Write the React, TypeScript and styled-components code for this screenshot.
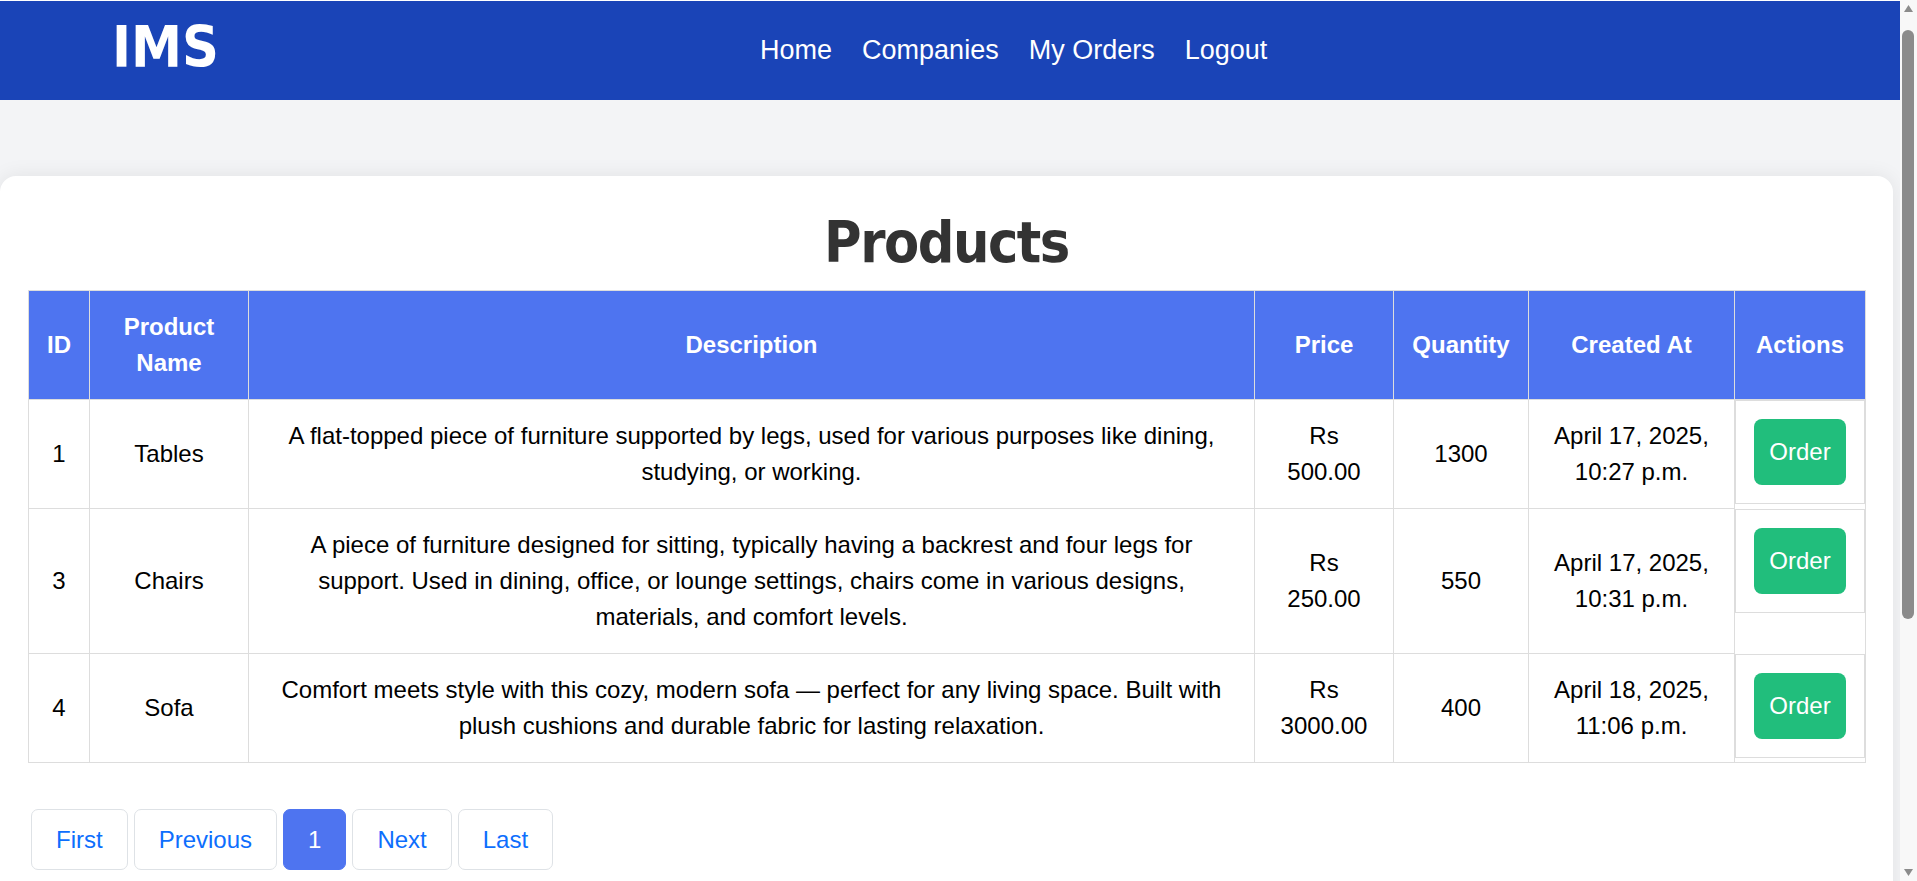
import React from 'react';
import styled, { createGlobalStyle } from 'styled-components';

const GlobalStyle = createGlobalStyle`
  html, body { margin: 0; padding: 0; }
  body {
    background: #f3f4f6;
    font-family: "Liberation Sans", Arial, sans-serif;
    color: #000;
  }
  * { box-sizing: border-box; }
`;

const Page = styled.div`
  border-top: 1px solid #ffffff;
  margin-right: 17px;
  padding-bottom: 80px;
`;

const NavBar = styled.header`
  height: 99px;
  background: #1a44b7;
  display: flex;
  align-items: center;
  padding-left: 112px;
`;

const Logo = styled.div`
  font-family: "DejaVu Sans Condensed", "DejaVu Sans", sans-serif;
  font-stretch: condensed;
  font-weight: 700;
  font-size: 57px;
  line-height: 1;
  color: #ffffff;
  margin-top: -6px;
`;

const NavLinks = styled.nav`
  display: flex;
  gap: 30px;
  margin-left: 541px;
`;

const NavLink = styled.a`
  color: #ffffff;
  font-size: 27px;
  text-decoration: none;
`;

const Card = styled.main`
  background: #ffffff;
  margin: 76px 7px 0 0;
  border-radius: 16px;
  box-shadow: 0 0 20px rgba(0, 0, 0, 0.08);
  padding: 0 28px 300px;
`;

const Title = styled.h1`
  font-family: "DejaVu Sans Condensed", "DejaVu Sans", sans-serif;
  font-stretch: condensed;
  font-weight: 700;
  font-size: 57px;
  letter-spacing: -1.5px;
  line-height: 68px;
  color: #333333;
  text-align: center;
  margin: 0 0 14px;
  padding-top: 32px;
`;

const Table = styled.table`
  width: 100%;
  border-collapse: collapse;
  border: 1px solid #dddddd;
  table-layout: fixed;
  font-size: 24px;
  line-height: 36px;
`;

const Col = styled.col<{ $w: number }>`
  width: ${(p) => p.$w}px;
`;

const HeadCell = styled.th`
  background: #4e74f0;
  color: #ffffff;
  font-weight: 700;
  padding: 18px;
  border: 1px solid #dddddd;
  text-align: center;
  vertical-align: middle;
`;

const Cell = styled.td`
  padding: 18px;
  border: 1px solid #dddddd;
  text-align: center;
  vertical-align: middle;
`;

const ActionCell = styled.td`
  display: flex;
  justify-content: center;
  align-items: center;
  padding: 18px;
  border: 1px solid #dddddd;
`;

const OrderButton = styled.button`
  background: #21be7c;
  color: #ffffff;
  border: none;
  border-radius: 8px;
  padding: 18px 15px;
  font-family: "Liberation Sans", Arial, sans-serif;
  font-size: 24px;
  line-height: 30px;
  cursor: pointer;
`;

const Pager = styled.div`
  display: flex;
  gap: 6px;
  margin: 46px 0 0 3px;
`;

const PageButton = styled.button<{ $active?: boolean }>`
  font-family: "Liberation Sans", Arial, sans-serif;
  font-size: 24px;
  line-height: 27px;
  padding: 16px 24px;
  border: 1px solid ${(p) => (p.$active ? '#4e74f0' : '#dee2e6')};
  background: ${(p) => (p.$active ? '#4e74f0' : '#ffffff')};
  color: ${(p) => (p.$active ? '#ffffff' : '#0d6efd')};
  border-radius: 7px;
  cursor: pointer;
`;

/* Browser scrollbar, drawn over the right edge of the window */
const ScrollTrack = styled.div`
  position: fixed;
  top: 0;
  right: 0;
  bottom: 0;
  width: 17px;
  background: #f8f8f8;
`;

const ScrollArrow = styled.svg<{ $pos: 'top' | 'bottom' }>`
  position: absolute;
  left: 3px;
  ${(p) => (p.$pos === 'top' ? 'top: 4px;' : 'bottom: 4px;')}
  width: 11px;
  height: 9px;
`;

const ScrollThumb = styled.div`
  position: absolute;
  top: 30px;
  left: 2px;
  width: 12px;
  height: 589px;
  border-radius: 6px;
  background: #8b8b8b;
`;

const products = [
  {
    id: 1,
    name: 'Tables',
    description:
      'A flat-topped piece of furniture supported by legs, used for various purposes like dining, studying, or working.',
    price: 'Rs 500.00',
    quantity: 1300,
    created: 'April 17, 2025, 10:27 p.m.',
  },
  {
    id: 3,
    name: 'Chairs',
    description:
      'A piece of furniture designed for sitting, typically having a backrest and four legs for support. Used in dining, office, or lounge settings, chairs come in various designs, materials, and comfort levels.',
    price: 'Rs 250.00',
    quantity: 550,
    created: 'April 17, 2025, 10:31 p.m.',
  },
  {
    id: 4,
    name: 'Sofa',
    description:
      'Comfort meets style with this cozy, modern sofa \u2014 perfect for any living space. Built with plush cushions and durable fabric for lasting relaxation.',
    price: 'Rs 3000.00',
    quantity: 400,
    created: 'April 18, 2025, 11:06 p.m.',
  },
];

const colWidths = [61, 159, 1006, 139, 135, 206, 131];
const headers = ['ID', 'Product Name', 'Description', 'Price', 'Quantity', 'Created At', 'Actions'];

export default function App() {
  return (
    <Page>
      <GlobalStyle />
      <NavBar>
        <Logo>IMS</Logo>
        <NavLinks>
          <NavLink href="#">Home</NavLink>
          <NavLink href="#">Companies</NavLink>
          <NavLink href="#">My Orders</NavLink>
          <NavLink href="#">Logout</NavLink>
        </NavLinks>
      </NavBar>
      <Card>
        <Title>Products</Title>
        <Table>
          <colgroup>
            {colWidths.map((w, i) => (
              <Col key={i} $w={w} />
            ))}
          </colgroup>
          <thead>
            <tr>
              {headers.map((h) => (
                <HeadCell key={h}>{h}</HeadCell>
              ))}
            </tr>
          </thead>
          <tbody>
            {products.map((p) => (
              <tr key={p.id}>
                <Cell>{p.id}</Cell>
                <Cell>{p.name}</Cell>
                <Cell>{p.description}</Cell>
                <Cell>{p.price}</Cell>
                <Cell>{p.quantity}</Cell>
                <Cell>{p.created}</Cell>
                <ActionCell>
                  <OrderButton>Order</OrderButton>
                </ActionCell>
              </tr>
            ))}
          </tbody>
        </Table>
        <Pager>
          <PageButton>First</PageButton>
          <PageButton>Previous</PageButton>
          <PageButton $active>1</PageButton>
          <PageButton>Next</PageButton>
          <PageButton>Last</PageButton>
        </Pager>
      </Card>
      <ScrollTrack>
        <ScrollArrow $pos="top" viewBox="0 0 11 9">
          <polygon points="5.5,1 10,8 1,8" fill="#8b8b8b" />
        </ScrollArrow>
        <ScrollThumb />
        <ScrollArrow $pos="bottom" viewBox="0 0 11 9">
          <polygon points="1,1 10,1 5.5,8" fill="#8b8b8b" />
        </ScrollArrow>
      </ScrollTrack>
    </Page>
  );
}
